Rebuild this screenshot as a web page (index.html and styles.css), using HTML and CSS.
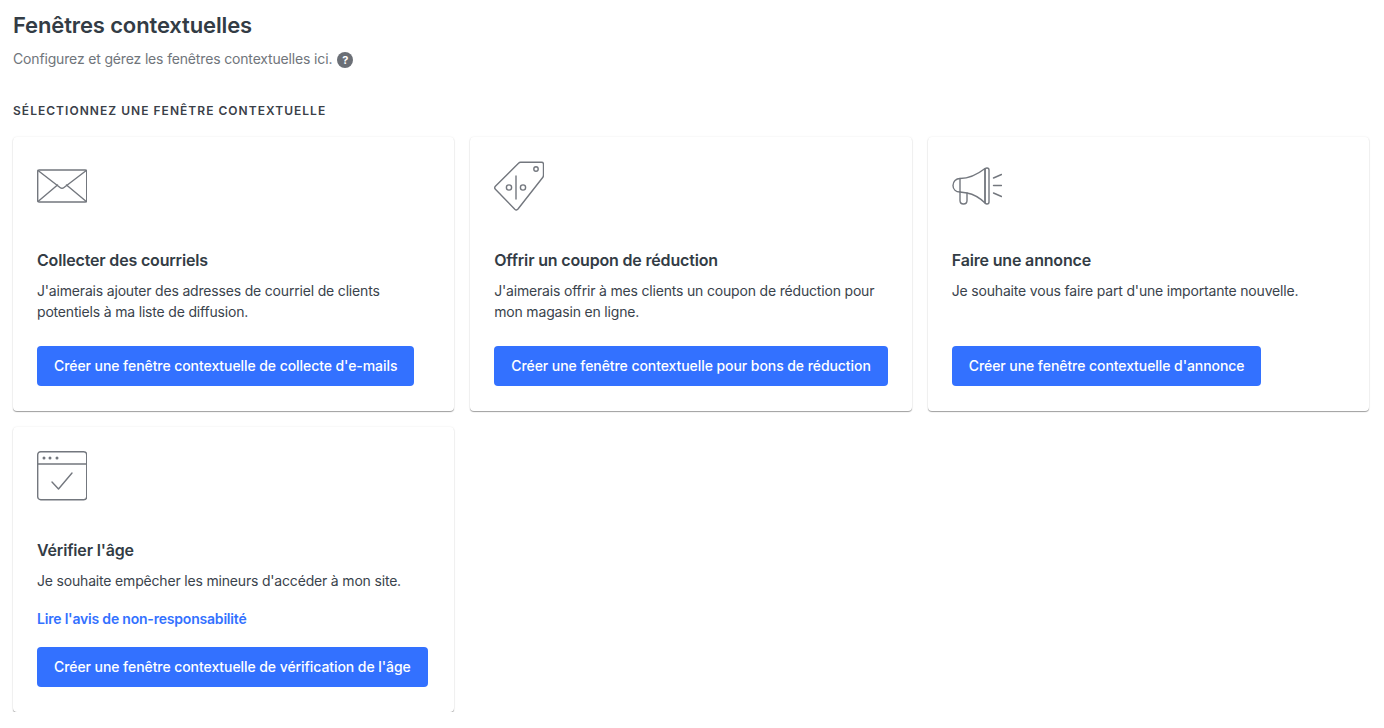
FILE: index.html
```html
<!DOCTYPE html>
<html lang="fr">
<head>
<meta charset="utf-8">
<title>Fenêtres contextuelles</title>
<link rel="stylesheet" href="styles.css">
</head>
<body>
<main class="page">
  <h1 class="page-title">Fenêtres contextuelles</h1>
  <p class="page-desc">Configurez et gérez les fenêtres contextuelles ici. <span class="help">?</span></p>
  <h2 class="section-label">SÉLECTIONNEZ UNE FENÊTRE CONTEXTUELLE</h2>
  <div class="grid">
    <article class="card">
      <svg class="icon" viewBox="0 0 50 50">
        <rect x="0.7" y="9" width="49" height="32" rx="1.5"/>
        <path d="M1 9.5 L23 26.5 Q25 28 27 26.5 L49.3 9.5"/>
        <path d="M1 40.5 L20.5 24 M49.3 40.5 L29.5 24"/>
      </svg>
      <h3 class="card-title">Collecter des courriels</h3>
      <p class="card-text">J'aimerais ajouter des adresses de courriel de clients potentiels à ma liste de diffusion.</p>
      <a class="btn" href="#">Créer une fenêtre contextuelle de collecte d'e-mails</a>
    </article>
    <article class="card">
      <svg class="icon" viewBox="0 0 50 50">
        <path d="M26.5 1.2 H47.5 Q49.5 1.2 49.5 3.2 V14 Q49.5 15.5 48.5 16.8 L24 48 Q22.5 49.8 20.8 48.3 L1.4 28.3 Q0 26.8 1.4 25.3 L24.5 2.2 Q25.5 1.2 26.5 1.2 Z"/>
        <circle cx="42" cy="8" r="2.2"/>
        <circle cx="15" cy="26.5" r="2.6"/>
        <circle cx="29" cy="26.5" r="2.6"/>
        <path d="M22 15 V38"/>
      </svg>
      <h3 class="card-title">Offrir un coupon de réduction</h3>
      <p class="card-text">J'aimerais offrir à mes clients un coupon de réduction pour mon magasin en ligne.</p>
      <a class="btn" href="#">Créer une fenêtre contextuelle pour bons de réduction</a>
    </article>
    <article class="card">
      <svg class="icon" viewBox="0 0 50 50">
        <path d="M8 17.5 C18 17.5 26 13 33 7.5 V42 C28 37 23 33.5 15 32 L8 31 C4 31 1 28.5 1 24.5 C1 20.5 4 17.5 8 17.5 Z"/>
        <rect x="33" y="7" width="4" height="36" rx="2"/>
        <path d="M8 17.5 V31"/>
        <path d="M8 31 V39.5 Q8 43 11.5 43 Q15 43 15 39.5 V32"/>
        <path d="M41.5 17 L49.5 13.5 M41.5 24.5 H49.5 M41.5 32 L49.5 35.5"/>
      </svg>
      <h3 class="card-title">Faire une annonce</h3>
      <p class="card-text">Je souhaite vous faire part d'une importante nouvelle.</p>
      <a class="btn" href="#">Créer une fenêtre contextuelle d'annonce</a>
    </article>
    <article class="card">
      <svg class="icon" viewBox="0 0 50 50">
        <rect x="0.7" y="0.7" width="49" height="48" rx="3"/>
        <path d="M0.7 13 H49.7"/>
        <path d="M15 31 L21.5 38 L35 22"/>
        <circle class="dot" cx="7" cy="7" r="1.5"/><circle class="dot" cx="13" cy="7" r="1.5"/><circle class="dot" cx="20" cy="7" r="1.5"/>
      </svg>
      <h3 class="card-title">Vérifier l'âge</h3>
      <p class="card-text">Je souhaite empêcher les mineurs d'accéder à mon site.</p>
      <a class="card-link" href="#">Lire l'avis de non-responsabilité</a>
      <a class="btn" href="#">Créer une fenêtre contextuelle de vérification de l'âge</a>
    </article>
  </div>
</main>
</body>
</html>
```

FILE: styles.css
```css
* { box-sizing: border-box; }
html, body { margin: 0; background: #fff; }
body { font-family: Inter, "Liberation Sans", sans-serif; color: #3a434c; }
.page { padding: 12px 15px 0 13px; }
.page-title { margin: 0; font-size: 22px; line-height: 26px; font-weight: 600; letter-spacing: -0.13px; color: #333c45; }
.page-desc { margin: 11px 0 0; display: flex; align-items: flex-start; gap: 5px; font-size: 14px; line-height: 20px; letter-spacing: -0.16px; color: #70757b; }
.help { width: 16px; height: 16px; margin-top: 3px; border-radius: 50%; background: #6b6f76; color: #fff; font-size: 11px; line-height: 16px; font-weight: 700; letter-spacing: 0; text-align: center; }
.section-label { margin: 34px 0 0; font-size: 12px; line-height: 16px; font-weight: 600; letter-spacing: 1.03px; color: #3a4048; }
.grid { margin-top: 18px; display: grid; grid-template-columns: repeat(3, 1fr); gap: 16px; align-items: start; }
.card { display: flex; flex-direction: column; align-items: flex-start; padding: 24px 24px 25px; background: #fff; border-radius: 4px; box-shadow: 0 0 2px rgba(0,0,0,.09), 0 1px 1px rgba(0,0,0,.36); }
.icon { width: 50px; height: 50px; display: block; fill: none; stroke: #73777e; stroke-width: 1.4; stroke-linejoin: round; stroke-linecap: round; }
.dot { fill: #73777e; stroke: none; }
.card-title { margin: 39px 0 0; font-size: 16px; line-height: 20px; font-weight: 600; letter-spacing: -0.17px; color: #333c45; }
.card-text { margin: 10px 0 0; font-size: 14px; line-height: 21px; min-height: 42px; letter-spacing: -0.18px; }
.card:last-child .card-text { min-height: 21px; }
.card-link { margin-top: 18px; font-size: 14px; line-height: 20px; font-weight: 600; letter-spacing: -0.2px; color: #3371ff; text-decoration: none; }
.btn { margin-top: 24px; padding: 0 17px 2px; height: 40px; display: flex; align-items: center; background: #3371ff; color: #fff; border-radius: 4px; font-size: 14px; font-weight: 500; letter-spacing: -0.07px; text-decoration: none; white-space: nowrap; }
.card-link + .btn { margin-top: 18px; }
```
